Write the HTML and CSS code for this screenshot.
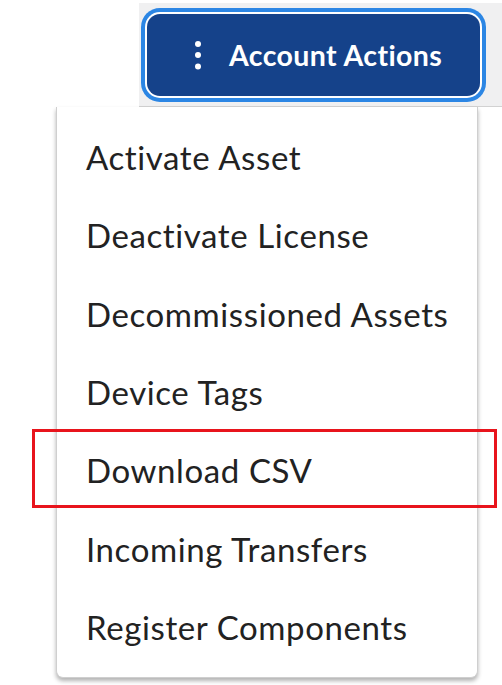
FILE: index.html
```html
<!DOCTYPE html>
<html lang="en">
<head>
<meta charset="utf-8">
<title>Account Actions</title>
<link rel="stylesheet" href="styles.css">
</head>
<body>
<div class="page">
  <div class="toolbar">
    <button class="actions-btn" type="button">
      <svg class="kebab" width="8" height="30" viewBox="0 0 8 30" aria-hidden="true">
        <circle cx="4" cy="4" r="3" fill="#fff"/>
        <circle cx="4" cy="15" r="3" fill="#fff"/>
        <circle cx="4" cy="26.5" r="3" fill="#fff"/>
      </svg>
      <span class="btn-label">Account Actions</span>
    </button>
  </div>
  <ul class="menu">
    <li class="menu-item">Activate Asset</li>
    <li class="menu-item">Deactivate License</li>
    <li class="menu-item">Decommissioned Assets</li>
    <li class="menu-item">Device Tags</li>
    <li class="menu-item">Download CSV</li>
    <li class="menu-item">Incoming Transfers</li>
    <li class="menu-item">Register Components</li>
  </ul>
  <div class="highlight"></div>
</div>
</body>
</html>
```

FILE: styles.css
```css
html, body {
  margin: 0;
  padding: 0;
  background: #ffffff;
}

body {
  font-family: Lato, "Open Sans", "Liberation Sans", sans-serif;
  width: 502px;
  height: 685px;
  overflow: hidden;
}

.page {
  position: relative;
  padding-top: 3px;
}

.toolbar {
  margin-left: 139px;
  height: 104px;
  background: #f0f0f1;
  border-bottom: 1px solid #d2d2d2;
  padding: 11px 0 0 8px;
  box-sizing: border-box;
}

.actions-btn {
  display: flex;
  align-items: center;
  width: 333px;
  height: 82px;
  padding: 0 0 0 47px;
  box-sizing: border-box;
  background: #15428a;
  border: none;
  border-radius: 13px;
  box-shadow: 0 0 0 2px #ffffff, 0 0 0 6px #2c86e4;
  color: #ffffff;
  font-family: inherit;
  cursor: pointer;
}

.kebab {
  flex: none;
  display: block;
}

.btn-label {
  margin-left: 27px;
  font-size: 28.5px;
  font-weight: 700;
  letter-spacing: 0.4px;
}

.menu {
  list-style: none;
  margin: 0 0 0 56px;
  padding: 11px 0;
  width: 422px;
  box-sizing: border-box;
  background: #ffffff;
  border: 1px solid #cfcfcf;
  border-top: none;
  border-radius: 0 0 7px 7px;
  box-shadow: 0 3px 4px rgba(0, 0, 0, 0.3);
}

.menu-item {
  height: 78.3px;
  display: flex;
  align-items: center;
  padding-left: 29px;
  font-size: 33px;
  letter-spacing: 0.6px;
  color: #222222;
  white-space: nowrap;
}

.highlight {
  position: absolute;
  left: 32px;
  top: 429px;
  width: 465px;
  height: 79px;
  box-sizing: border-box;
  border: 3px solid #e8141c;
}
```
